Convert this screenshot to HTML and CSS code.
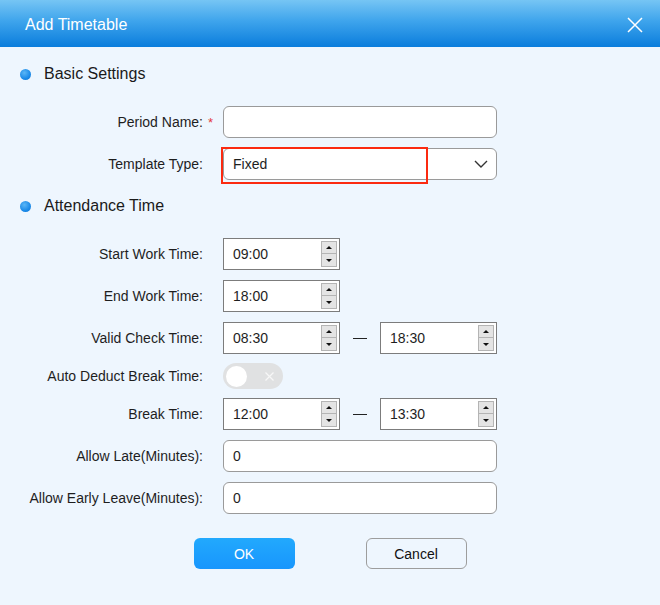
FILE: index.html
```html
<!DOCTYPE html>
<html lang="en">
<head>
<meta charset="utf-8">
<title>Add Timetable</title>
<link rel="stylesheet" href="styles.css">
</head>
<body>
<div class="dialog">
  <header class="dialog-header">
    <h1 class="dialog-title">Add Timetable</h1>
    <button class="close-btn" aria-label="Close">
      <svg width="16" height="16" viewBox="0 0 16 16"><path d="M1 1 L15 15 M15 1 L1 15" stroke="#fff" stroke-width="1.5" fill="none"/></svg>
    </button>
  </header>

  <section class="section">
    <h2 class="section-title"><span class="dot"></span>Basic Settings</h2>
    <div class="rows">
      <div class="row">
        <label class="label">Period Name:</label>
        <span class="req">*</span>
        <input class="text-input" type="text" value="">
      </div>
      <div class="row">
        <label class="label">Template Type:</label>
        <span class="req"></span>
        <div class="select">
          <span class="select-value">Fixed</span>
          <svg class="chevron" width="14" height="8" viewBox="0 0 14 8"><path d="M1 1 L7 7 L13 1" stroke="#333" stroke-width="1.4" fill="none"/></svg>
          <span class="highlight"></span>
        </div>
      </div>
    </div>
  </section>

  <section class="section section-second">
    <h2 class="section-title"><span class="dot"></span>Attendance Time</h2>
    <div class="rows">
      <div class="row">
        <label class="label">Start Work Time:</label>
        <span class="req"></span>
        <div class="time-input"><span class="time-value">09:00</span><span class="spinner"><span class="spin up"></span><span class="spin down"></span></span></div>
      </div>
      <div class="row">
        <label class="label">End Work Time:</label>
        <span class="req"></span>
        <div class="time-input"><span class="time-value">18:00</span><span class="spinner"><span class="spin up"></span><span class="spin down"></span></span></div>
      </div>
      <div class="row">
        <label class="label">Valid Check Time:</label>
        <span class="req"></span>
        <div class="range">
          <div class="time-input"><span class="time-value">08:30</span><span class="spinner"><span class="spin up"></span><span class="spin down"></span></span></div>
          <span class="dash"></span>
          <div class="time-input"><span class="time-value">18:30</span><span class="spinner"><span class="spin up"></span><span class="spin down"></span></span></div>
        </div>
      </div>
      <div class="row row-toggle">
        <label class="label">Auto Deduct Break Time:</label>
        <span class="req"></span>
        <div class="toggle">
          <span class="knob"></span>
          <svg class="toggle-x" width="9" height="9" viewBox="0 0 9 9"><path d="M0.5 0.5 L8.5 8.5 M8.5 0.5 L0.5 8.5" stroke="#f7f7f7" stroke-width="1.2" fill="none"/></svg>
        </div>
      </div>
      <div class="row row-after-toggle">
        <label class="label">Break Time:</label>
        <span class="req"></span>
        <div class="range">
          <div class="time-input"><span class="time-value">12:00</span><span class="spinner"><span class="spin up"></span><span class="spin down"></span></span></div>
          <span class="dash"></span>
          <div class="time-input"><span class="time-value">13:30</span><span class="spinner"><span class="spin up"></span><span class="spin down"></span></span></div>
        </div>
      </div>
      <div class="row">
        <label class="label">Allow Late(Minutes):</label>
        <span class="req"></span>
        <input class="text-input" type="text" value="0">
      </div>
      <div class="row">
        <label class="label">Allow Early Leave(Minutes):</label>
        <span class="req"></span>
        <input class="text-input" type="text" value="0">
      </div>
    </div>
  </section>

  <footer class="actions">
    <button class="btn btn-primary">OK</button>
    <button class="btn btn-default">Cancel</button>
  </footer>
</div>
</body>
</html>
```

FILE: styles.css
```css
* {
  box-sizing: border-box;
}

html, body {
  margin: 0;
  padding: 0;
}

body {
  width: 660px;
  height: 605px;
  background: #eef6fe;
  font-family: "Liberation Sans", Arial, sans-serif;
  font-size: 14px;
  color: #1e1e1e;
  overflow: hidden;
}

.dialog {
  width: 660px;
}

.dialog-header {
  height: 47px;
  background: linear-gradient(to bottom, #76c5f4 0%, #3ea4ec 45%, #0a7ddc 100%);
  display: flex;
  align-items: center;
  justify-content: space-between;
  padding: 2px 17px 0 25px;
}

.dialog-title {
  margin: 0;
  font-size: 16px;
  font-weight: normal;
  color: #fff;
}

.close-btn {
  border: 0;
  background: transparent;
  padding: 0;
  width: 16px;
  height: 16px;
  display: flex;
}

.section {
  padding-top: 17px;
}

.section-second {
  padding-top: 16px;
}

.section-title {
  margin: 0;
  height: 20px;
  display: flex;
  align-items: center;
  font-size: 16px;
  font-weight: normal;
  color: #1a1a1a;
  padding-left: 20px;
}

.dot {
  width: 11px;
  height: 11px;
  border-radius: 50%;
  background: radial-gradient(circle at 40% 35%, #5ab6f6 0%, #1b8ae8 60%, #0a74d4 100%);
  margin-right: 13px;
}

.rows {
  margin-top: 22px;
  display: flex;
  flex-direction: column;
  gap: 10px;
}

.row {
  display: grid;
  grid-template-columns: 203px 20px auto;
  align-items: center;
  height: 32px;
}

.row-toggle {
  height: 26px;
  margin-top: -1px;
}

.row-after-toggle {
  margin-top: -1px;
}

.label {
  text-align: right;
  white-space: nowrap;
  color: #1e1e1e;
}

.req {
  color: #e4393c;
  font-size: 13px;
  padding-left: 5px;
  line-height: 1;
}

.text-input {
  width: 274px;
  height: 32px;
  border: 1px solid #9a9a9a;
  border-radius: 6px;
  background: #fff;
  padding: 0 9px;
  font-family: inherit;
  font-size: 14px;
  color: #1e1e1e;
  outline: none;
}

.select {
  position: relative;
  width: 274px;
  height: 32px;
  border: 1px solid #9a9a9a;
  border-radius: 6px;
  background: #fff;
  display: flex;
  align-items: center;
  justify-content: space-between;
  padding: 0 8px 0 9px;
}

.chevron {
  display: block;
}

.highlight {
  position: absolute;
  left: -3px;
  top: -2px;
  width: 207px;
  height: 37px;
  border: 2px solid #fb2a10;
  pointer-events: none;
}

.range {
  display: flex;
  align-items: center;
}

.dash {
  width: 14px;
  height: 1px;
  background: #222;
  margin: 0 13px;
}

.time-input {
  width: 117px;
  height: 32px;
  border: 1px solid #7c7c7c;
  background: #fff;
  display: flex;
  align-items: center;
  padding-left: 9px;
  padding-right: 2px;
}

.time-value {
  flex: 1;
}

.spinner {
  display: flex;
  flex-direction: column;
  width: 16px;
}

.spin {
  height: 13px;
  background: #e4e4e4;
  border: 1px solid #b4b4b4;
  position: relative;
}

.spin.down {
  border-top: 0;
  height: 13px;
}

.spin::after {
  content: "";
  position: absolute;
  left: 50%;
  top: 50%;
  margin-left: -3px;
  border-left: 3px solid transparent;
  border-right: 3px solid transparent;
}

.spin.up::after {
  margin-top: -2px;
  border-bottom: 3px solid #111;
}

.spin.down::after {
  margin-top: -1px;
  border-top: 3px solid #111;
}

.toggle {
  position: relative;
  width: 60px;
  height: 26px;
  border-radius: 13px;
  background: #e0e1e2;
  display: flex;
  align-items: center;
  padding-left: 3px;
}

.knob {
  width: 21px;
  height: 21px;
  border-radius: 50%;
  background: #fff;
}

.toggle-x {
  margin-left: 18px;
}

.actions {
  display: flex;
  justify-content: center;
  gap: 71px;
  margin-top: 24px;
}

.btn {
  width: 101px;
  height: 31px;
  border-radius: 6px;
  font-family: inherit;
  font-size: 14px;
  padding: 0;
}

.btn-primary {
  border: 0;
  background: linear-gradient(to bottom, #22a9fd, #1896fd);
  color: #fff;
}

.btn-default {
  border: 1px solid #9d9d9d;
  background: transparent;
  color: #111;
}
```
